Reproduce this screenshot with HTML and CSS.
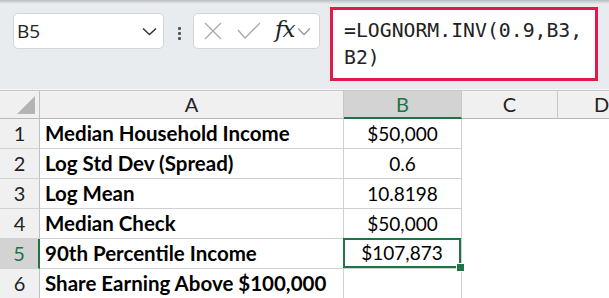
FILE: index.html
```html
<!DOCTYPE html>
<html lang="en">
<head>
    <meta charset="UTF-8">
    <title>LOGNORM.INV</title>
    <link rel="stylesheet" href="styles.css">
</head>
<body>
    <div class="toolbar">
        <div class="namebox">
            <span>B5</span>
            <svg class="chev" width="15" height="9" viewBox="0 0 15 9"><path d="M1 1.5 L7.5 7.5 L14 1.5" fill="none" stroke="#333" stroke-width="1.5"/></svg>
        </div>
        <div class="dots"><i></i><i></i><i></i></div>
        <div class="fxbox">
            <svg width="18" height="18" viewBox="0 0 18 18"><path d="M1 1 L17 17 M17 1 L1 17" stroke="#a8a8a8" stroke-width="1.3"/></svg>
            <svg width="24" height="18" viewBox="0 0 24 18"><path d="M1 8 L8 16 L23 1" fill="none" stroke="#a8a8a8" stroke-width="1.3"/></svg>
            <span class="fx">fx</span>
            <svg width="14" height="9" viewBox="0 0 14 9"><path d="M1 1.5 L7 7.5 L13 1.5" fill="none" stroke="#9a9a9a" stroke-width="1.3"/></svg>
        </div>
        <div class="formula">=LOGNORM.INV(0.9,B3,<br>B2)</div>
    </div>

    <div class="sheet">
        <div class="corner"><span class="tri"></span></div>
        <div class="colhead">A</div>
        <div class="colhead active">B</div>
        <div class="colhead">C</div>
        <div class="colhead last">D</div>

        <div class="rowhead">1</div>
        <div class="cell label">Median Household Income</div>
        <div class="cell value">$50,000</div>
        <div class="cell blank"></div>
        <div class="cell blank"></div>

        <div class="rowhead">2</div>
        <div class="cell label">Log Std Dev (Spread)</div>
        <div class="cell value">0.6</div>
        <div class="cell blank"></div>
        <div class="cell blank"></div>

        <div class="rowhead">3</div>
        <div class="cell label">Log Mean</div>
        <div class="cell value">10.8198</div>
        <div class="cell blank"></div>
        <div class="cell blank"></div>

        <div class="rowhead">4</div>
        <div class="cell label">Median Check</div>
        <div class="cell value">$50,000</div>
        <div class="cell blank"></div>
        <div class="cell blank"></div>

        <div class="rowhead active">5</div>
        <div class="cell label">90th Percentile Income</div>
        <div class="cell value selected">$107,873<span class="handle"></span></div>
        <div class="cell blank"></div>
        <div class="cell blank"></div>

        <div class="rowhead">6</div>
        <div class="cell label">Share Earning Above $100,000</div>
        <div class="cell value"></div>
        <div class="cell blank"></div>
        <div class="cell blank"></div>
    </div>
</body>
</html>
```

FILE: styles.css
```css
/* Basis */
body {
    margin: 0;
    font-family: 'Lato', 'Liberation Sans', sans-serif;
    background-color: #fff;
    color: #000;
    overflow: hidden;
}

/* Bovenbalk met naamvak en formule */
.toolbar {
    height: 90px;
    box-sizing: border-box;
    background: linear-gradient(#b9bcbf, #e9ecef 4px);
    border-bottom: 1px solid #f6f7f8;
    display: flex;
    align-items: flex-start;
    padding-left: 13px;
}

.namebox {
    margin-top: 13px;
    width: 151px;
    height: 36px;
    box-sizing: border-box;
    background: #fff;
    border: 1px solid #d3d6d9;
    border-radius: 5px;
    display: flex;
    align-items: center;
    justify-content: space-between;
    padding: 0 6px 0 3px;
    font-family: 'Open Sans', sans-serif;
    font-size: 19px;
    color: #222;
}

.dots {
    margin: 27px 12px 0 14px;
    display: flex;
    flex-direction: column;
    gap: 2px;
}

.dots i {
    width: 3px;
    height: 3px;
    background: #555;
    border-radius: 1px;
}

.fxbox {
    margin-top: 13px;
    width: 127px;
    height: 36px;
    box-sizing: border-box;
    background: #fff;
    border: 1px solid #d3d6d9;
    border-radius: 5px;
    display: flex;
    align-items: center;
    padding: 0 3px 0 10px;
}

.fxbox svg:nth-child(2) {
    margin-left: 15px;
}

.fx {
    font-family: 'DejaVu Serif', serif;
    font-style: italic;
    font-size: 23px;
    letter-spacing: -1px;
    color: #222;
    margin: -4px 3px 0 14px;
}

.formula {
    margin: 7px 0 0 10px;
    width: 268px;
    height: 74px;
    box-sizing: border-box;
    background: #fff;
    border: 3px solid #e01b4c;
    padding: 7px 0 0 11px;
    font-family: 'DejaVu Sans Mono', monospace;
    font-size: 19.8px;
    line-height: 27px;
    color: #222;
    white-space: nowrap;
}

/* Rekenblad */
.sheet {
    display: grid;
    grid-template-columns: 40px 304px 118px 96px 1fr;
    grid-template-rows: 28px repeat(6, 30px);
    border-top: 1px solid #c8c8c8;
}

.corner {
    background: #f0f0f0;
    border-right: 1px solid #c0c0c0;
    border-bottom: 1px solid #b8b8b8;
    position: relative;
}

.tri {
    position: absolute;
    right: 4px;
    bottom: 4px;
    width: 0;
    height: 0;
    border-left: 18px solid transparent;
    border-bottom: 18px solid #b4b4b4;
}

.colhead {
    background: #f0f0f0;
    border-right: 1px solid #c6c6c6;
    border-bottom: 1px solid #b8b8b8;
    text-align: center;
    font-size: 20px;
    line-height: 27px;
    color: #222;
}

.colhead.active {
    background: #d3d3d3;
    color: #217346;
    border-bottom: 2px solid #217346;
    line-height: 26px;
}

.colhead.last {
    border-right: none;
    text-align: left;
    padding-left: 36px;
}

.rowhead {
    background: #f0f0f0;
    border-right: 1px solid #c0c0c0;
    border-bottom: 1px solid #d2d2d2;
    text-align: center;
    font-size: 20px;
    line-height: 29px;
    color: #222;
}

.rowhead.active {
    background: #d3d3d3;
    color: #217346;
    border-right: 2px solid #217346;
}

.cell {
    border-right: 1px solid #d0d0d0;
    border-bottom: 1px solid #d0d0d0;
    font-size: 19px;
    line-height: 29px;
    white-space: nowrap;
}

.cell.label {
    font-weight: bold;
    font-size: 20.5px;
    padding-left: 5px;
}

.cell.value {
    text-align: center;
}

.cell.blank {
    border: none;
}

.cell.selected {
    position: relative;
    box-shadow: inset 0 0 0 2px #217346;
    margin: -1px 0 0 -1px;
    line-height: 30px;
}

.handle {
    position: absolute;
    right: -4px;
    bottom: -4px;
    width: 7px;
    height: 7px;
    background: #217346;
    border: 1px solid #fff;
}
```
